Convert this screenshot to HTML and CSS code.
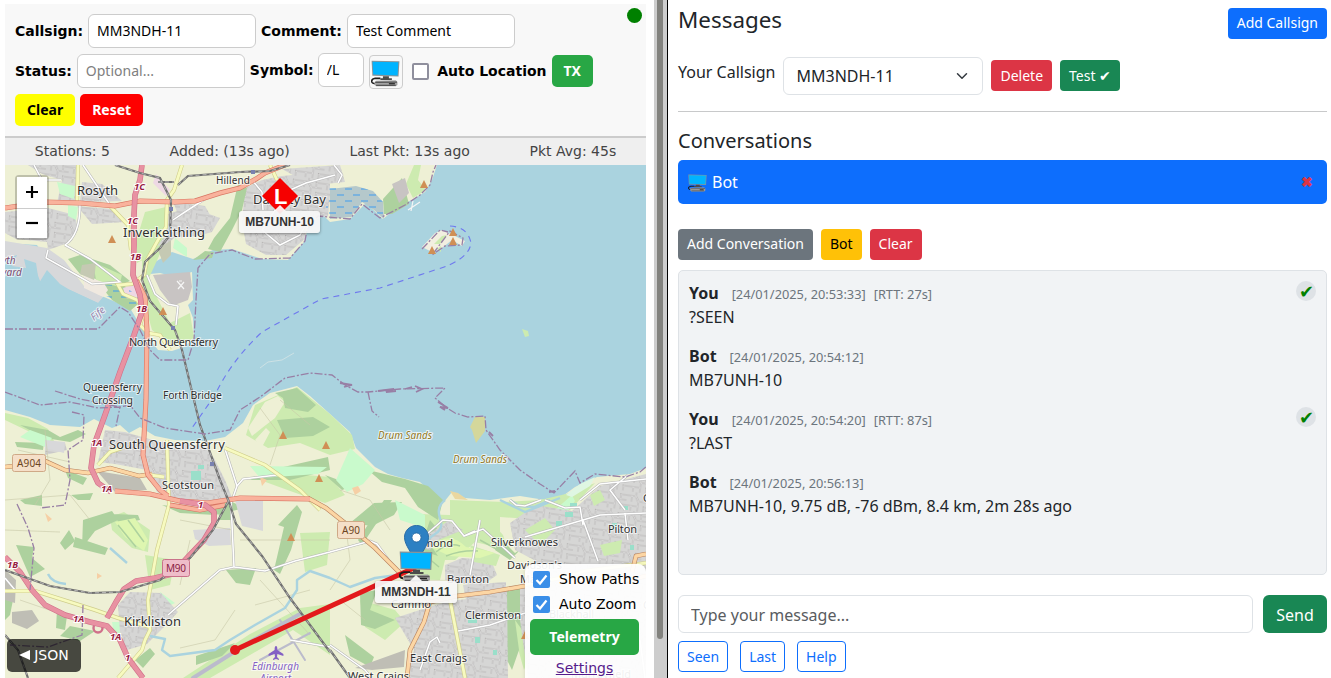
FILE: index.html
```html
<!DOCTYPE html>
<html lang="en">
<head>
<meta charset="utf-8">
<title>APRS Map and Messages</title>
<link rel="stylesheet" href="styles.css">
</head>
<body>
<svg class="defs" width="0" height="0">
  <symbol id="computer" viewBox="0 0 34 31">
    <path d="M.7.5 33.300 1 32.300 19 1.600 18z" fill="#8a9498"/>
    <path d="M1.800 1.800 32 2.200 31.200 17.800 2.600 16.800z" fill="#00b4ff"/>
    <path d="M14 18.800h7V21h3.500v2H11v-2h3z" fill="#4c4c4c"/>
    <path d="M11 21.200H5Q.5 22 .8 25q.4 2.500 5 2.500" fill="none" stroke="#1d1d1d" stroke-width="1.800"/>
    <path d="M6 24 29 23.500 31 25.500V29L29 30.500H6L4 28.500V26z" fill="#a3a3a3"/>
    <path d="M5 25.800 30.500 25.500M6 29.500h23" stroke="#555" stroke-width="1.400"/>
    <path d="M21 27.500h7" stroke="#222" stroke-width="1.400"/>
  </symbol>
</svg>
<div class="app">
  <section class="left">
    <div class="controls">
      <span class="online"></span>
      <div class="row">
        <label>Callsign:</label><input class="field" value="MM3NDH-11">
        <label>Comment:</label><input class="field" value="Test Comment">
      </div>
      <div class="row row2">
        <label>Status:</label><input class="field" placeholder="Optional...">
        <label class="raised">Symbol:</label><input class="field sym raised" value="/L">
        <span class="symbox"><svg width="29" height="27"><use href="#computer"/></svg></span>
        <span class="check off"></span><label class="auto">Auto Location</label>
        <button class="btn green">TX</button>
      </div>
      <div class="row row3">
        <button class="btn yellow">Clear</button><button class="btn red">Reset</button>
      </div>
    </div>
    <div class="stats"><span>Stations: 5</span><span>Added: (13s ago)</span><span>Last Pkt: 13s ago</span><span>Pkt Avg: 45s</span></div>
    <div class="map">
      <svg class="tiles" width="641" height="513" viewBox="5 165 641 513">
        <defs>
          <pattern id="town" width="23" height="19" patternUnits="userSpaceOnUse" patternTransform="rotate(8)">
            <rect width="23" height="19" fill="#d6d6d5"/>
            <path d="M0 4h9l3 5h11M9 4V0M12 9v10M0 14h12M17 9V4h6M18 19v-5h5M5 4v6M5 19v-5" fill="none" stroke="#b3b1b0" stroke-width="2"/>
            <path d="M0 4h9l3 5h11M9 4V0M12 9v10M0 14h12M17 9V4h6M18 19v-5h5M5 4v6M5 19v-5" fill="none" stroke="#eee" stroke-width=".8"/>
          </pattern>
          <pattern id="marsh" width="16" height="12" patternUnits="userSpaceOnUse">
            <path d="M1 3h7M9 9h7" stroke="#3f9dee" stroke-width="1"/>
          </pattern>
        </defs>
        <rect x="5" y="165" width="641" height="513" fill="#aad3df"/>

        <!-- northern shore -->
        <path fill="#eef0d5" d="M5 165H437L432 180 425 192 412 200 400 205 383 219 366 203 350 219 330 222 322 214 308 228 304 242 288 260 262 259 232 249 213 250 193 259 172 252 155 262 150 274 160 273 175 277 192 272 193 300 188 305 193 318 194 338 184 347 172 351 158 350 143 330 130 308 104 297 82 288 48 262 37 245 5 243z"/>
        <path fill="#d7d8da" d="M5 241 47 248 64 260 84 286 103 297 98 303 70 290 60 284 47 270 39 283 36 263 24 259 26 268 12 266 17 255 5 259z"/>
        <path fill="#aad3df" d="M5 268 25 271 35 268 42 286 50 276 60 287 70 290 98 303 70 305 40 290 5 290z"/>
        <path fill="url(#town)" d="M28 165H76L76 202 57 203 62 180 42 174z M82 182 102 184 122 201 80 202z M5 212 48 208 75 215 78 230 65 244 48 250 47 242 16 239 5 233z M77 206 112 209 126 222 92 224z M141 234 155 240 165 215 190 207 220 218 212 232 198 236 174 238 160 251 145 259z M173 202 205 206 214 222 182 224z"/>
        <path fill="url(#town)" d="M245 188 262 180 282 176 303 174 318 182 330 180 330 196 328 216 305 220 306 238 286 255 266 255 246 244 242 222z M282 169 340 165 345 182 325 184 300 179z"/>
        <path fill="#add19e" d="M238 184 247 188 242 210 232 230 220 252 208 249 214 238 230 218z M68 259 80 255 110 265 130 281 118 286 80 274z M145 225 158 218 166 228 155 240 143 240z M383 199 402 178 409 204 392 214 384 214z M205 251 214 252 212 258 193 260z M100 285 122 282 138 304 130 311 112 300z"/>
        <path fill="#cdebb0" d="M145 212 166 207 167 233 150 256 137 263 137 238z M142 252 165 243 148 280 170 323 190 313 194 338 174 347 152 330 142 294z M414 165 421 165 418 180 426 190 413 198 406 184z M93 262 122 275 119 287 96 280z"/>
        <path fill="#c9facc" d="M57 182 75 186 74 199 60 194z M175 238 187 248 187 257 173 248z M68 205 78 207 76 220 68 216z"/>
        <path fill="#eed8e4" d="M156 174 170 190 166 196 153 183z M123 288 136 284 137 300 126 298z"/>
        <path fill="#f0e9e0" d="M84 275 104 283 108 290 103 297 84 288z"/>
        <path fill="#c8c4c3" d="M153 275 190 272 192 287 188 300 172 306 160 290z M392 184 405 178 409 193 399 203z"/>
        <path fill="#c5c9b3" d="M82 265 96 263 94 280 80 274z M158 250 171 240 171 255 163 263z"/>
        <path fill="#b5c8cb" d="M330 189 356 186 373 191 383 202 384 219 374 210 362 202 351 217 330 219z"/>
        <path fill="url(#marsh)" d="M330 187 356 186 373 191 383 202 383 218 362 202 350 219 324 216z M104 286 122 283 141 300 135 309 104 295z"/>
        <path fill="#f2efe0" d="M422 247 435 233 442 230 453 235 465 241 462 246 452 240 442 248 432 252z"/>
        <path fill="#cdebb0" d="M434 244 442 236 447 235 440 244z M522 329 528 331 529 336 525 337z M437 249 441 246 441 252z"/>

        <!-- southern shore -->
        <path fill="#eef0d5" d="M5 410 30 417 50 425 80 427 94 419 112 428 120 425 129 433 140 427 155 436 175 440 205 441 225 437 243 423 253 405 270 393 297 386 310 396 330 414 350 432 356 448 375 467 388 474 402 478 420 482 437 498 444 502 452 492 465 498 490 500 520 496 545 500 560 498 575 487 597 477 630 474 646 468V678H5z"/>
        <g fill="#cdebb0">
          <path d="M255 405 297 387 330 414 352 435 355 449 330 455 300 443 268 448 246 435z"/>
          <path d="M110 517 124 512 150 530 148 552 132 548 112 530z"/>
          <path d="M300 533 330 532 327 565 305 572z M5 413 28 418 48 429 55 443 30 432 5 420z"/>
          <path d="M450 500 505 502 540 500 570 493 595 483 570 510 545 520 500 517 500 535 470 530 450 520z"/>
          <path d="M418 514 450 515 480 510 503 535 508 550 475 542 455 560 430 560z"/>
          <path d="M360 600 395 610 405 622 385 640 365 627z M515 585 530 600 535 640 524 670 510 620z M405 555 420 545 445 560 440 580 410 579z"/>
          <path d="M183 678 250 634 300 608 330 604 330 655 293 630 250 655 210 678z M480 625 512 610 522 650 490 660z"/>
          <path d="M260 480 295 474 330 477 345 495 325 503 293 492z M145 555 175 560 170 585 150 590z"/>
        </g>
        <g fill="#eef0d5">
          <path d="M265 402 278 396 285 402 275 418 262 428 252 436 248 428z M255 440 266 428 270 432 262 447z M288 450 300 445 304 456 290 462z"/>
        </g>
        <g fill="#add19e">
          <path d="M275 393 297 388 316 405 308 412 285 408 283 398z M277 420 313 417 330 427 313 436 285 438z"/>
          <path d="M368 470 405 479 428 486 443 500 438 520 418 507 405 488 382 482z M325 475 344 482 366 472 360 484 342 490z"/>
          <path d="M15 442 44 443 43 450 17 447z M65 470 87 478 83 485 68 478z M20 500 42 495 42 506 25 504z M71 495 93 493 90 500 78 500z"/>
          <path d="M83 520 112 511 118 520 95 531 82 548z M75 537 108 548 105 555 73 547z M113 514 138 515 140 520 120 524z"/>
          <path d="M60 543 69 530 75 541 65 550z M16 545 34 547 32 558 45 569 30 577z M57 610 67 616 65 630 56 628z M278 525 297 505 302 512 291 550 280 574 274 570 284 527z"/>
          <path d="M162 505 195 509 230 501 245 508 215 515 180 513z M226 570 256 568 250 585 236 583z"/>
          <path d="M196 656 235 643 222 656 196 665z M5 588 13 600 10 615 5 620z M250 480 270 470 328 457 330 470 290 480z"/>
          <path d="M374 503 402 502 394 515 372 526 350 523z M360 593 377 590 370 610 395 620 375 629 361 625z M507 590 521 588 524 610 528 638 515 620 519 650 512 670 507 660z"/>
          <path d="M430 520 440 532 425 537 438 556 420 550z M500 538 515 553 522 548 510 560 495 550z"/>
          <path d="M70 626 95 631 80 641 60 636z M218 512 230 507 232 520 220 520z M135 660 150 648 155 654 143 668z M345 635 374 657 370 667 350 656z"/>
          <path d="M384 500 392 500 372 530 362 545 358 540z M20 425 48 430 60 437 78 430 86 434 70 442 45 438z"/>
        </g>
        <path fill="#c9facc" d="M350 448 375 470 363 484 347 492 336 480z M395 500 425 515 425 528 400 520z M30 430 52 438 45 447 20 437z M250 466 327 467 318 474 260 478z M112 622 128 622 128 637 114 634z M160 592 175 603 160 610z M555 510 572 495 575 501 563 517z"/>
        <path fill="#dff6e3" d="M566 495 580 484 595 477 590 486 572 497z"/>
        <path fill="url(#town)" d="M105 430 125 432 156 441 204 446 214 458 225 480 233 500 216 506 180 502 157 492 147 470 115 464 98 462z M118 605 130 592 161 593 178 612 166 625 147 644 127 650 120 632z M45 445 65 443 67 450 45 455z"/>
        <path fill="url(#town)" d="M420 537 432 532 448 521 463 530 438 540 430 550 420 548z M445 565 462 558 491 560 497 575 480 587 445 580z M395 618 429 607 450 601 475 598 507 590 508 678H407L414 650z M510 523 536 505 572 511 600 486 646 474V678H528L520 620 520 585 534 560 515 550z"/>
        <path fill="url(#town)" d="M463 585 506 582 506 605 490 620 468 610z"/>
        <path fill="#d8d8da" d="M235 500 263 500 263 531 242 526z M193 530 230 528 231 545 209 546 195 539z M45 440 65 442 64 453 45 448z"/>
        <path fill="#bfbeb5" d="M97 471 140 478 147 490 115 492z M12 612 32 610 39 621 27 629 12 623z M5 570 16 580 15 603 5 600z M355 668 405 650 404 667 372 670z"/>
        <path fill="#cdebb0" d="M470 545 500 555 496 566 474 562z M525 530 545 518 555 530 540 545z M600 545 622 540 620 553 604 556z M590 495 600 490 605 500 594 506z"/>
        <g fill="#9adfca">
          <path d="M191 471h10v9h-10z M198 465h6v4h-6z M556 521h6v5h-6z M565 512h8v5h-8z M570 503h7v5h-7z M475 637h5v6h-5z M550 564h5v5h-5z M624 506h4v4h-4z M612 523h5v7h-5z M468 618h9v5h-9z M493 650h4v5h-4z M630 545h4v5h-4z"/>
        </g>
        <g fill="#def6b0">
          <path d="M432 548Q448 529 466 547 486 550 495 553L480 558 450 556z M115 522 135 518 148 540 144 551 125 537z"/>
        </g>
        <g fill="none" stroke="#add19e" stroke-width="1.500">
          <path d="M436 552q12-10 24-6M446 556q16-6 32-5M118 525l18 22M128 520l16 22M480 540l18 10M427 557l12 10"/>
        </g>
        <path fill="#f6cfa5" d="M352 488 358 486 361 491 355 495z M45 513 52 519 48 522z M97 573l5 3-5 3z M260 477l7 3-5 6z"/>
        <path fill="#ead7a0" d="M450 491 458 493 468 500 455 499z"/>
        <path fill="#d4d79b" d="M475 417 485 417 485 431 476 443 472 430 470 427z"/>
        <g fill="none" stroke="#c8c8a8" stroke-width=".6">
          <path d="M18 450 70 462M45 430 50 480 35 505M5 500 70 495 90 520M5 530 60 532M20 600 55 612M180 520 232 530M190 540 180 585M240 540 330 540M260 580 310 635M235 610 215 640 180 648M255 605 310 590M345 520 350 560 330 590M260 408 280 435 270 465M280 400 310 425M340 600 365 620M340 490 370 500 390 530"/>
        </g>

        <!-- waterways and runways -->
        <g fill="none" stroke="#aad3df" stroke-width="2.4" stroke-linejoin="round">
          <path d="M445 500Q436 507 440 518T435 534Q425 540 418 555M330 578 350 587 375 578 397 575M150 636 165 639 162 650 170 656 215 650 230 640 255 625 285 608 297 590 297 580 310 571 330 578M110 548 127 563M48 574Q52 583 66 584M500 500 525 512 560 498"/>
          <path d="M510 500 519 506 534 507 550 500"/>
        </g>
        <g fill="none" stroke="#bbc" stroke-linecap="round">
          <path stroke-width="4" d="M193 678 250 642 300 614"/>
          <path stroke-width="2" d="M260 660 310 633M280 620 305 660"/>
        </g>

        <!-- local roads -->
        <g fill="none" stroke="#b7b7b7" stroke-width="2.6" stroke-linejoin="round">
          <path id="lanes" d="M83 165 110 205M34 165 42 180 61 180M48 250 46 258 80 277 92 284 120 282 90 259 65 245M65 245Q80 235 80 205M173 220Q195 205 215 193M147 275 155 294 168 304 178 306 176 325M225 449 237 486 243 479 277 475M237 486 231 503 234 567 220 570 168 615M234 567 265 571 295 561 330 552M330 552 370 541 377 544M377 544 398 573M420 540 443 520 452 521 464 536 483 529 515 558M464 536 475 531M541 500 525 506 516 505 510 500M525 537 583 520 600 515 646 513M583 520 598 561M625 513 628 540M545 500 565 508 580 507 583 525M458 631 490 625 525 613M420 670 430 642 437 637 440 643M262 192 252 180M262 192 263 210M275 210 262 230 280 245 300 235 310 217M290 190 306 183 335 175M338 183 342 175 334 165M5 578 15 590M330 645 365 670 372 678M290 640 330 647M580 500 600 484 646 479M628 475 610 490 625 510M480 520 470 575M640 640 645 678"/>
        </g>
        <use href="#lanes" class="over lanes"/>
        <g fill="none" stroke="#cfcd8c" stroke-width="4">
          <path id="yellow" d="M182 165 174 190 167 200 166 227 158 240 147 260 144 275 132 284 118 285 123 294 137 300 145 310 140 325 148 333 160 335 170 350M78 165 77 203M109 205 128 225 131 250M167 440 168 475 169 505 157 550 148 600 150 630 145 640 142 650 118 678M98 465 110 452 122 448M225 448 265 465 300 490 320 510M5 591 35 591 70 602 95 610 118 618 150 627M150 475 164 477M450 600 465 678M525 585 565 577 585 571 646 563M270 165 277 180"/>
        </g>
        <use href="#yellow" class="over yellow-road"/>

        <!-- main roads -->
        <g fill="none" stroke="#b9835f" stroke-width="4.600">
          <path id="primary" d="M5 467 25 465 45 461 65 470 88 473 110 468 139 476 152 474M308 498 326 508 350 527 375 548 397 570 420 590 430 602 424 622 410 650 407 678M457 596 490 592 525 586M430 602 457 596M570 582 630 580 646 576M632 572 636 556 646 554"/>
        </g>
        <use href="#primary" class="over primary"/>
        <g fill="none" stroke="#d87462" stroke-width="5">
          <path id="trunk" d="M5 208 45 202 80 203 115 206 140 201 175 202 195 201 220 193 240 188 256 179 265 173 285 165M136 280 145 297 147 330 146 400 143 455 148 475 160 490 168 496M115 491 150 494 180 501 208 503 240 498 310 499M170 505 200 510 225 505"/>
        </g>
        <use href="#trunk" class="over trunk"/>
        <g fill="none" stroke="#d0708a" stroke-width="5.600" stroke-linejoin="round">
          <path id="motorway" d="M142 165 140 180 135 195 134 215 134 245 133 275 140 295 142 312 134 335 120 372 105 415 94 445 91 468 98 483 111 492M180 501 205 505 214 512 214 523 204 540 187 558 172 574 155 578 136 581 124 589 116 602 107 618M5 557 20 572 32 590 45 605 65 615 90 622 107 626 120 640 128 658 143 678"/>
          <circle cx="98" cy="628" r="4.500" stroke-width="2.400"/>
        </g>
        <use href="#motorway" class="over motorway"/>

        <!-- railways -->
        <g fill="none" stroke="#707070" stroke-width="2.2">
          <path id="rail" d="M115 165 140 173 160 178 171 200 170 235 160 248 145 262 142 280 150 301 175 330 182 350 200 425 220 480 229 502 236 524 262 556 290 598 330 652M228 502 213 530 190 558 160 580 120 592 90 593 50 586 5 570M178 185 188 176 240 172 270 171 290 165M158 182H174M5 635 18 650 28 678M330 650 350 678"/>
        </g>
        <use href="#rail" class="over rail"/>

        <!-- boundaries, ferries -->
        <g fill="none" stroke="#987fa5" stroke-width="1.3" stroke-dasharray="8 2 2 2">
          <path d="M5 329H98L120 307 128 312 140 330 150 350 160 360 188 360 194 340 196 300 198 268 210 254 232 250 255 259 290 258 305 241 307 230 318 216 350 219 362 204 380 218 405 205 420 195 430 185 433 172 436 165"/>
          <path d="M5 392 40 405 70 402 98 408 120 407 116 426M55 391 80 399 120 407 130 405 140 418 165 428 205 434 230 430 240 410 260 397 285 378 310 373 332 375 345 385 358 392 368 392 400 389 445 388 435 398 447 408 455 413 468 417 485 416 486 430 500 450 520 470 540 484 554 493 575 471 580 483 595 474 625 477 640 472 646 467"/>
          <path d="M368 392 372 411 379 417M72 412 84 415 83 440 68 450 70 480 65 505 40 508M17 504 28 528 34 548 30 590M83 605 82 635 48 647 10 645"/>
          <path d="M422 249 440 230 448 232M450 231 463 238 462 245 445 246 432 255z"/>
        </g>
        <path fill="none" stroke="#987fa5" stroke-width="1.800" d="M340 383l12 2-8 2M378 391l16-2-8 3 10-1M405 389l7-2M415 386l7 3-6 3M438 402l10 6-8-1 5 3M489 432l4 4M549 492l6-1"/>
        <path fill="none" stroke="#6f79ee" stroke-width="1.1" stroke-dasharray="6 5" d="M450 226Q468 227 471 243 469 260 435 270L380 288 321 299 262 332Q231 361 215 395L192 428"/>
        <g fill="#d08f55">
          <path id="peak" d="M424 180l4 8h-8z"/>
          <use href="#peak" x="-312" y="55"/><use href="#peak" x="-261" y="127"/><use href="#peak" x="29" y="48"/><use href="#peak" x="29" y="57"/><use href="#peak" x="8" y="66"/><use href="#peak" x="-141" y="251"/><use href="#peak" x="-98" y="261"/><use href="#peak" x="-105" y="294"/><use href="#peak" x="-133" y="353"/><use href="#peak" x="101" y="451"/>
        </g>
        <path fill="#7981b0" d="M169 207h4v4h-4zM251 170h4v4h-4zM171 326h4v4h-4zM210 462h4v4h-4z"/>
        <path fill="none" stroke="#f5f5f5" stroke-width="1.2" d="M177 281l7 8m-6 0 6-7m-5-1 3 0M408 210l12-8M411 211l2-10"/>
        <path fill="none" stroke="#d5e4e6" stroke-width=".8" d="M260 368l8-6 14-2 12-7"/>
        <path fill="#8461c4" d="M276 646c1 0 1.4 1 1.4 4l6 4v2l-6-2-.4 3 2 2v1l-3-1-3 1v-1l2-2-.4-3-6 2v-2l6-4c0-3 .4-4 1.4-4z"/>

        <!-- road shields -->
        <g class="shields">
          <rect x="12.500" y="454.500" width="33" height="17" rx="2" fill="#f5dfc8" stroke="#cfa987"/>
          <text x="17" y="467" fill="#6c4522" textLength="24">A904</text>
          <rect x="337.500" y="521.500" width="27" height="17" rx="2" fill="#f5dfc8" stroke="#cfa987"/>
          <text x="342" y="534" fill="#6c4522" textLength="18">A90</text>
          <rect x="162.500" y="559.500" width="27" height="17" rx="2" fill="#efbdc9" stroke="#c9728a"/>
          <text x="166" y="572" fill="#8a1e43" textLength="20">M90</text>
        </g>
        <g class="refs">
          <text x="134" y="190">1C</text><text x="127" y="224">1C</text><text x="130" y="260">1B</text><text x="136" y="312">1B</text>
          <text x="91" y="446">1A</text><text x="101" y="492">1A</text><text x="198" y="508">1</text>
          <text x="7" y="568">1B</text><text x="73" y="622">1A</text><text x="110" y="640">1A</text><text x="125" y="661">1</text>
        </g>

        <!-- place names -->
        <g class="places">
          <text x="77" y="195" font-size="13" textLength="41">Rosyth</text>
          <text x="123" y="237" font-size="13" textLength="82">Inverkeithing</text>
          <text x="216" y="184" font-size="10" textLength="34">Hillend</text>
          <text x="253" y="204" font-size="13" textLength="73">Dalgety Bay</text>
          <text x="129" y="346" font-size="11" textLength="89">North Queensferry</text>
          <text x="83" y="391" font-size="10.5" textLength="59">Queensferry</text>
          <text x="92" y="404" font-size="10.5" textLength="41">Crossing</text>
          <text x="163" y="399" font-size="10.5" textLength="59">Forth Bridge</text>
          <text x="109" y="449" font-size="13" textLength="116">South Queensferry</text>
          <text x="162" y="489" font-size="11" textLength="52">Scotstoun</text>
          <text x="124" y="626" font-size="13" textLength="57">Kirkliston</text>
          <text x="406" y="547" font-size="11" textLength="47">Cramond</text>
          <text x="491" y="546" font-size="11" textLength="67">Silverknowes</text>
          <text x="608" y="533" font-size="11" textLength="29">Pilton</text>
          <text x="507" y="569" font-size="11" textLength="55">Davidson's</text>
          <text x="520" y="583" font-size="11">Mains</text>
          <text x="447" y="583" font-size="11" textLength="42">Barnton</text>
          <text x="391" y="608" font-size="11" textLength="40">Cammo</text>
          <text x="465" y="619" font-size="11" textLength="56">Clermiston</text>
          <text x="410" y="662" font-size="11" textLength="57">East Craigs</text>
          <text x="348" y="680" font-size="11" textLength="61">West Craigs</text>
          <text x="549" y="618" font-size="11" textLength="45">Blackhall</text>
          <text x="571" y="678" font-size="11" textLength="60">Murrayfield</text>
          <text x="643" y="502" font-size="11">Granton</text>
          <text x="643" y="609" font-size="11">Craigleith</text>
        </g>
        <g class="sands"><text x="378" y="439" textLength="54">Drum Sands</text><text x="453" y="463" textLength="54">Drum Sands</text></g>
        <g class="airport"><text x="252" y="670" textLength="47">Edinburgh</text><text x="260" y="682" textLength="31">Airport</text></g>
        <g class="dock"><text x="-14" y="264">Rosyth</text><text x="-20" y="276">Dockyard</text><text x="94" y="321" transform="rotate(-40 94 321)" class="fife">Fife</text></g>

        <!-- packet path -->
        <path d="M235 650 416 567" stroke="#e31a1c" stroke-width="5"/>
        <circle cx="235" cy="650" r="5" fill="#e31a1c"/>
      </svg>
      <svg class="diamond" width="36" height="36" viewBox="0 0 36 36"><path d="M18 0 36 18 18 36 0 18z" fill="#f60000"/><text x="12" y="26" fill="#fff">L</text></svg>
      <svg class="pin" width="25" height="41" viewBox="0 0 25 41"><path d="M12.5.5C5.5.5.5 5.8.5 12.3.5 20.5 8 27 12.5 40 17 27 24.500 20.500 24.500 12.300 24.500 5.800 19.500.5 12.500.5z" fill="#2c80c3" stroke="#286ca5"/><circle cx="12.500" cy="12.500" r="4.600" fill="#fff" stroke="#286ca5"/></svg>
      <svg class="station" width="34" height="31"><use href="#computer"/></svg>
      <span class="tip tip1">MB7UNH-10</span>
      <span class="tip tip2">MM3NDH-11</span>
      <div class="zoom"><span><svg width="14" height="14"><path d="M1 7h12M7 1v12" stroke="#000" stroke-width="2.200"/></svg></span><span><svg width="14" height="14"><path d="M1 7h12" stroke="#000" stroke-width="2.200"/></svg></span></div>
      <div class="json"><svg width="11" height="10"><path d="M11 0v10L0 5z" fill="#fff"/></svg>JSON</div>
      <div class="panel">
        <div class="opt"><span class="check on"><svg width="17" height="17"><path d="M3.500 9 7 12.500 13.500 4.500" fill="none" stroke="#fff" stroke-width="2.200"/></svg></span><span class="optname">Show Paths</span></div>
        <div class="opt"><span class="check on"><svg width="17" height="17"><path d="M3.500 9 7 12.500 13.500 4.500" fill="none" stroke="#fff" stroke-width="2.200"/></svg></span><span class="optname">Auto Zoom</span></div>
        <button class="btn green tele">Telemetry</button>
        <a class="settings" href="#">Settings</a>
      </div>
    </div>
  </section>
  <div class="scroll"><div class="thumb"></div></div>
  <section class="right">
    <div class="head"><h4>Messages</h4><button class="bs primary-bg">Add Callsign</button></div>
    <div class="who"><label>Your Callsign</label><div class="select">MM3NDH-11<svg width="12" height="12" viewBox="0 0 16 16"><path d="m2 5 6 6 6-6" fill="none" stroke="#343a40" stroke-width="2" stroke-linecap="round" stroke-linejoin="round"/></svg></div><button class="bs danger">Delete</button><button class="bs success">Test ✔</button></div>
    <hr>
    <h5>Conversations</h5>
    <div class="conv"><svg width="19" height="18"><use href="#computer"/></svg><span>Bot</span><b>✖</b></div>
    <div class="actions"><button class="bs grey">Add Conversation</button><button class="bs warn">Bot</button><button class="bs danger">Clear</button></div>
    <div class="chat">
      <div class="msg"><strong>You</strong><small>[24/01/2025, 20:53:33]</small><small class="rtt">[RTT: 27s]</small><i>✔</i><p>?SEEN</p></div>
      <div class="msg"><strong>Bot</strong><small>[24/01/2025, 20:54:12]</small><p>MB7UNH-10</p></div>
      <div class="msg"><strong>You</strong><small>[24/01/2025, 20:54:20]</small><small class="rtt">[RTT: 87s]</small><i>✔</i><p>?LAST</p></div>
      <div class="msg"><strong>Bot</strong><small>[24/01/2025, 20:56:13]</small><p>MB7UNH-10, 9.75 dB, -76 dBm, 8.4 km, 2m 28s ago</p></div>
    </div>
    <div class="compose"><input placeholder="Type your message..."><button class="send">Send</button></div>
    <div class="quick"><button class="bs outline">Seen</button><button class="bs outline">Last</button><button class="bs outline">Help</button></div>
  </section>
</div>
</body>
</html>
```
FILE: styles.css
```css
* { box-sizing: border-box; }
body { margin: 0; background: #fff; overflow: hidden; }
button, input { font-family: "Noto Sans", sans-serif; margin: 0; }
.defs { position: absolute; }
.app { display: flex; width: 1331px; height: 678px; overflow: hidden; }

.left { width: 654px; padding: 4px 8px 0 5px; flex: none; font-family: "DejaVu Sans", sans-serif; font-size: 14px; display: flex; flex-direction: column; }
.controls { position: relative; height: 134px; background: #f8f8f8; border-bottom: 2px solid #ccc; padding: 10px 10px 0; flex: none; }
.online { position: absolute; right: 4px; top: 4px; width: 15px; height: 15px; border-radius: 50%; background: green; }
.row { display: flex; align-items: center; gap: 5px; height: 34px; }
.row2 { margin-top: 6px; }
.row3 { margin-top: 6px; height: 32px; }
.row label { font-weight: bold; white-space: nowrap; }
.field { width: 168px; height: 34px; border: 1px solid #ccc; border-radius: 6px; padding: 0 8px 2px; font-size: 14px; color: #000; background: #fff; }
.field::placeholder { color: #808080; opacity: 1; }
.sym { width: 46px; margin-left: -1px; }
.raised { position: relative; top: -1px; }
.symbox { width: 34px; height: 34px; border: 1px solid #ccc; border-radius: 4px; display: flex; align-items: flex-end; justify-content: center; position: relative; top: 1px; flex: none; padding-bottom: 1px; }
.check { width: 17px; height: 17px; border-radius: 2px; display: block; flex: none; }
.off { border: 2px solid #8f8f9d; background: #fff; margin-left: 4px; }
.on { background: #3a8ee8; }
.auto { margin-left: 3.5px; }
.btn { border: 0; border-radius: 5px; height: 32px; padding: 0 12px 2px; font-size: 14px; font-weight: bold; color: #fff; }
.green { background: #28a745; }
.yellow { background: #ff0; color: #000; }
.red { background: #f00; }
.stats { height: 27px; flex: none; background: #efefef; display: flex; justify-content: space-around; align-items: center; color: #444; padding-bottom: 2px; }

.map { position: relative; flex: 1; width: 641px; overflow: hidden; }
.tiles { display: block; }
.tiles text { font-family: "Noto Sans", sans-serif; }
.over { fill: none; }
g > path[id] { stroke: inherit; }
.lanes { stroke: #fff; stroke-width: 1.5; }
.yellow-road { stroke: #f7fabf; stroke-width: 2.8; }
.primary { stroke: #fcd6a4; stroke-width: 3.4; }
.trunk { stroke: #f9b29c; stroke-width: 3.8; }
.motorway { stroke: #e892a2; stroke-width: 4.4; stroke-linejoin: round; }
.rail { stroke: #d5d5d5; stroke-width: .7; stroke-dasharray: 4 3; }
.shields text { font-size: 10px; }
.refs text { font-size: 9.5px; font-style: italic; font-weight: bold; fill: #96203f; stroke: #fff; stroke-width: 2px; paint-order: stroke; }
.places text { fill: #303030; stroke: rgba(255, 255, 255, .65); stroke-width: 2px; paint-order: stroke; }
.sands text { font-size: 10px; font-style: italic; fill: #91761d; stroke: rgba(255, 255, 255, .75); stroke-width: 2px; paint-order: stroke; }
.airport text { font-size: 10px; font-style: italic; fill: #8461c4; stroke: rgba(255, 255, 255, .65); stroke-width: 2px; paint-order: stroke; }
.dock text { font-size: 10px; font-style: italic; fill: #7b4c70; stroke: rgba(255, 255, 255, .65); stroke-width: 2px; paint-order: stroke; }
.dock .fife { fill: #9a86ae; }
.diamond { position: absolute; left: 257px; top: 13px; }
.diamond text { font: bold 22px "Liberation Sans", sans-serif; }
.pin { position: absolute; left: 399px; top: 360px; }
.station { position: absolute; left: 394px; top: 386px; }
.tip { position: absolute; height: 22px; display: flex; align-items: center; justify-content: center; width: 81px; background: rgba(248, 248, 248, .93); border-radius: 3px; box-shadow: 0 1px 3px rgba(0, 0, 0, .4); font: bold 12px "Liberation Sans", sans-serif; color: #333; white-space: nowrap; }
.tip::before { content: ""; position: absolute; left: 50%; margin-left: -6px; top: -6px; border: 6px solid transparent; border-top: 0; border-bottom-color: rgba(255, 255, 255, .9); }
.tip1 { left: 234px; top: 46px; }
.tip2 { left: 370px; top: 416px; width: 82px; }
.zoom { position: absolute; left: 10px; top: 10px; width: 34px; border: 2px solid rgba(0, 0, 0, .2); border-radius: 4px; background-clip: padding-box; }
.zoom span { display: flex; height: 31px; align-items: center; justify-content: center; background: #fff; padding-bottom: 1px; }
.zoom span + span { height: 30px; border-top: 1px solid #ccc; }
.json { position: absolute; left: 2px; top: 474px; width: 74px; height: 33px; padding-bottom: 1px; border-radius: 5px; background: rgba(0, 0, 0, .7); color: #fff; display: flex; align-items: center; justify-content: center; gap: 4px; }
.panel { position: absolute; left: 520px; top: 399px; width: 121px; height: 125px; padding: 7px 7px 0 5px; border-radius: 8px; background: rgba(255, 255, 255, .93); box-shadow: 0 0 4px rgba(0, 0, 0, .12); display: flex; flex-direction: column; color: #000; }
.opt { display: flex; align-items: center; gap: 9px; height: 17px; margin: 0 0 8px 3px; white-space: nowrap; }
.optname { margin-top: -2px; }
.tele { height: 36px; margin-top: -2px; flex: none; }
.settings { color: #551a8b; text-align: center; margin-top: 5px; }

.scroll { width: 14px; flex: none; background: #cdcdcd; border-right: 1px solid #000; padding-left: 3px; }
.thumb { width: 6px; height: 639px; background: #82827e; border-radius: 0 0 3px 3px; }

.right { width: 649px; margin-left: 10px; flex: none; font: 16px/24px "Noto Sans", sans-serif; color: #212529; }
.head { display: flex; justify-content: space-between; padding-top: 8px; height: 57px; align-items: flex-start; }
h4, h5 { margin: 0; font-weight: 400; }
h4 { font-size: 22.4px; line-height: 26px; margin-top: -1px; }
h5 { font-size: 20px; line-height: 24px; height: 31px; }
.bs { height: 31px; border: 1px solid transparent; border-radius: 4px; padding: 0 8px 2px; font-size: 14px; line-height: 21px; color: #fff; white-space: nowrap; }
.primary-bg { background: #0d6efd; }
.danger { background: #dc3545; }
.success { background: #198754; }
.grey { background: #6c757d; }
.warn { background: #ffc107; color: #000; }
.outline { background: #fff; border-color: #0d6efd; color: #0d6efd; }
.who { display: flex; align-items: center; gap: 8px; height: 38px; }
.who label { margin-top: -8px; white-space: nowrap; }
.who .bs { margin-top: -1px; padding-bottom: 0; }
.select { width: 200px; height: 38px; border: 1px solid #dee2e6; border-radius: 6px; padding: 0 14px 0 12px; display: flex; align-items: center; justify-content: space-between; }
hr { margin: 16px 0 17px; border: 0; border-top: 1px solid #c8c9ca; }
.conv { height: 44px; background: #0d6efd; border-radius: 5px; color: #fff; display: flex; align-items: center; gap: 5px; padding: 0 14px 0 10px; }
.conv svg { margin-top: 2px; }
.conv b { margin-left: auto; color: #dc3545; font-size: 14px; }
.actions { display: flex; gap: 8px; margin: 25px 0 10px; }
.chat { height: 305px; border: 1px solid #dee2e6; border-radius: 5px; background: #f1f3f5; padding: 10px; }
.msg { height: 63px; position: relative; }
.msg strong { margin-right: 13px; }
.msg small { font-size: 12.8px; color: #6c757d; }
.msg .rtt { margin-left: 8px; }
.msg p { margin: -1px 0 0; }
.msg i { position: absolute; right: 0; top: 0; width: 20px; height: 20px; border-radius: 50%; background: #dee2e6; color: green; font-style: normal; font-size: 18px; line-height: 20px; text-align: center; }
.compose { display: flex; gap: 10px; margin-top: 20px; height: 38px; }
.compose input { flex: 1; border: 1px solid #dee2e6; border-radius: 6px; padding: 2px 12px 0; font-size: 16px; }
.compose input::placeholder { color: #595c5f; opacity: 1; }
.send { width: 64px; border: 0; border-radius: 6px; background: #198754; color: #fff; font-size: 16px; padding: 2px 0 0; }
.quick { display: flex; gap: 12px; margin-top: 8px; }
.quick .bs { padding-bottom: 0; }
```
